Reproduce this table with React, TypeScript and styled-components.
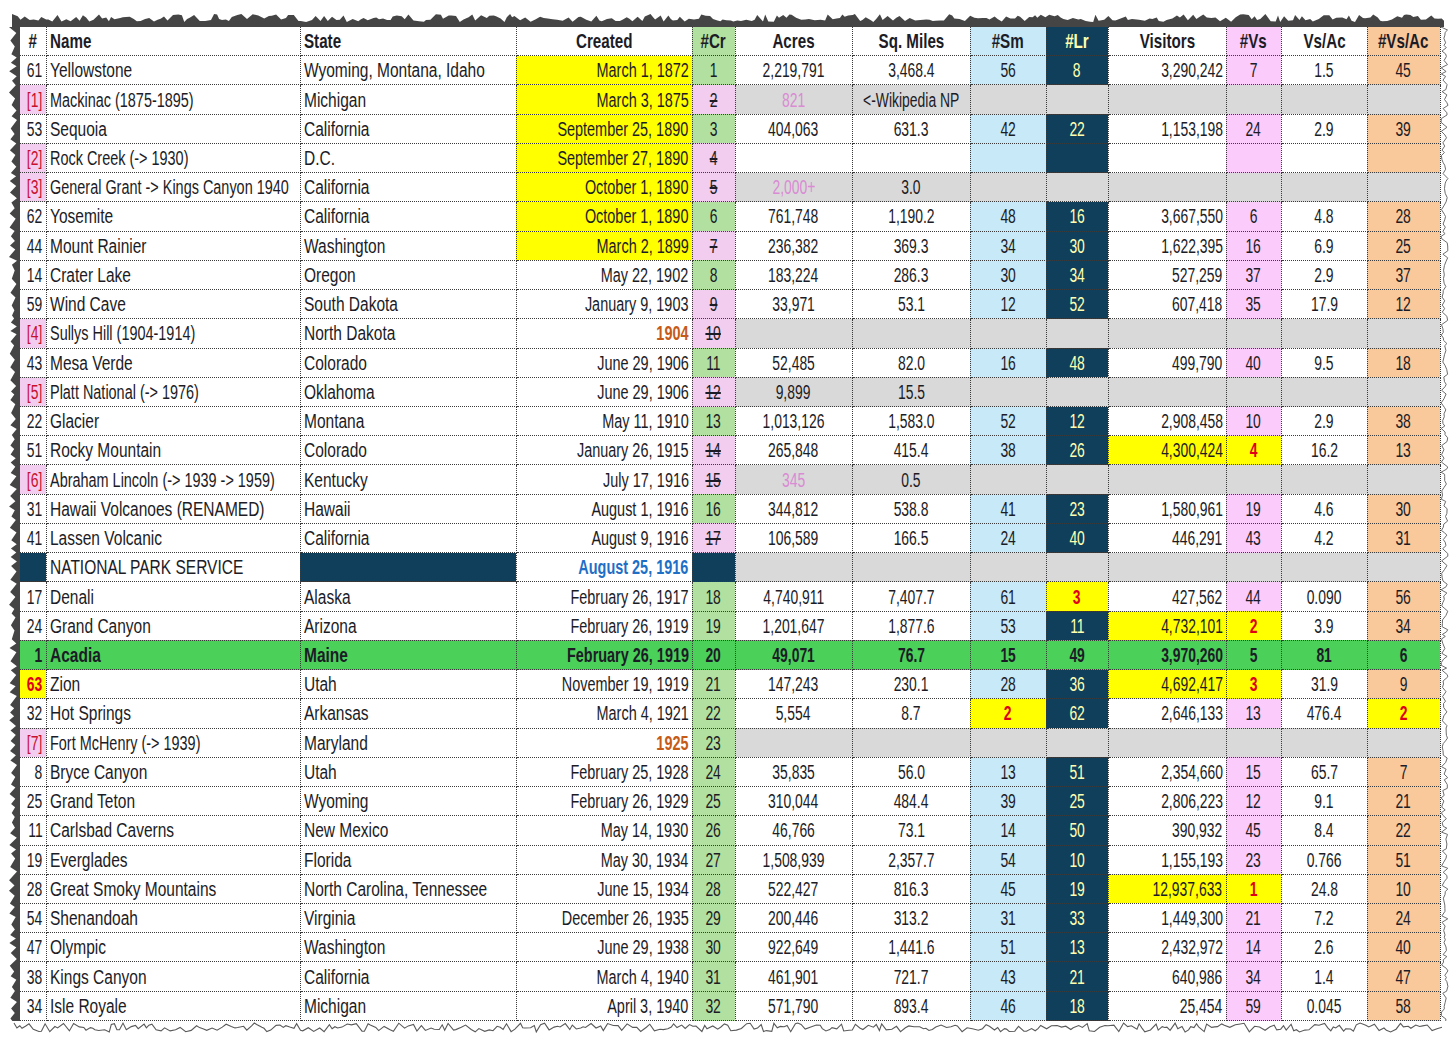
import React from "react";
import styled, { createGlobalStyle } from "styled-components";

const GlobalStyle = createGlobalStyle`
  body {
    margin: 0;
    background: #ffffff;
  }
`;

const C = {
  white: "#ffffff",
  yellow: "#ffff00",
  green: "#b1e0a0",
  pink: "#f2cdef",
  vsPink: "#fbcbfb",
  blue: "#c8e9f8",
  navy: "#0f3f5b",
  orange: "#f9c99c",
  gray: "#d9d9d9",
  acadia: "#4bd05a",
  ink: "#1c1c26",
  red: "#e00018",
  bracket: "#c8102e",
  lilac: "#d98bd4",
  rust: "#c65a17",
  link: "#1f6fc6",
  navyText: "#ffffb0",
};

type Key =
  | "num" | "name" | "state" | "created" | "cr" | "acres" | "sq"
  | "sm" | "lr" | "vis" | "vs" | "vsac" | "vsr";

type Align = "left" | "center" | "right";

interface Column {
  key: Key;
  label: string;
  width: number;
  align: Align;
  head: Align;
  bg: string;
}

const columns: Column[] = [
  { key: "num", label: "#", width: 26, align: "right", head: "center", bg: C.white },
  { key: "name", label: "Name", width: 254, align: "left", head: "left", bg: C.white },
  { key: "state", label: "State", width: 216, align: "left", head: "left", bg: C.white },
  { key: "created", label: "Created", width: 176, align: "right", head: "center", bg: C.white },
  { key: "cr", label: "#Cr", width: 43, align: "center", head: "center", bg: C.green },
  { key: "acres", label: "Acres", width: 117, align: "center", head: "center", bg: C.white },
  { key: "sq", label: "Sq. Miles", width: 118, align: "center", head: "center", bg: C.white },
  { key: "sm", label: "#Sm", width: 76, align: "center", head: "center", bg: C.blue },
  { key: "lr", label: "#Lr", width: 62, align: "center", head: "center", bg: C.navy },
  { key: "vis", label: "Visitors", width: 118, align: "right", head: "center", bg: C.white },
  { key: "vs", label: "#Vs", width: 55, align: "center", head: "center", bg: C.vsPink },
  { key: "vsac", label: "Vs/Ac", width: 86, align: "center", head: "center", bg: C.white },
  { key: "vsr", label: "#Vs/Ac", width: 73, align: "center", head: "center", bg: C.orange },
];

const rankKeys: Key[] = ["num", "sm", "lr", "vs", "vsr"];
// the text columns use a wider narrow face than the number columns
const textKeys: Key[] = ["name", "state", "created"];

const squeezeFor = (key: Key, value: string) => {
  if (!textKeys.includes(key)) return 0.695;
  return /[0-9>]/.test(value) ? 0.722 : 0.775;
};

interface Row {
  num: string;
  name: string;
  state: string;
  created: string;
  cr: string;
  acres?: string;
  sq?: string;
  sm?: string;
  lr?: string;
  vis?: string;
  vs?: string;
  vsac?: string;
  vsr?: string;
  kind?: "gone" | "nps" | "acadia";
  crGone?: boolean;
  hl?: Key[];
  lilac?: boolean;
  rust?: boolean;
}

const park = (
  num: string, name: string, state: string, created: string, cr: string,
  acres: string, sq: string, sm: string, lr: string, vis: string, vs: string, vsac: string, vsr: string,
  extra: Partial<Row> = {}
): Row => ({ num, name, state, created, cr, acres, sq, sm, lr, vis, vs, vsac, vsr, ...extra });

const rows: Row[] = [
  park("61", "Yellowstone", "Wyoming, Montana, Idaho", "March 1, 1872", "1", "2,219,791", "3,468.4", "56", "8", "3,290,242", "7", "1.5", "45", { hl: ["created"] }),
  { num: "[1]", name: "Mackinac (1875-1895)", state: "Michigan", created: "March 3, 1875", cr: "2", acres: "821", sq: "<-Wikipedia NP", kind: "gone", crGone: true, hl: ["created"], lilac: true },
  park("53", "Sequoia", "California", "September 25, 1890", "3", "404,063", "631.3", "42", "22", "1,153,198", "24", "2.9", "39", { hl: ["created"] }),
  { num: "[2]", name: "Rock Creek (-> 1930)", state: "D.C.", created: "September 27, 1890", cr: "4", crGone: true, hl: ["created"] },
  { num: "[3]", name: "General Grant -> Kings Canyon 1940", state: "California", created: "October 1, 1890", cr: "5", acres: "2,000+", sq: "3.0", kind: "gone", crGone: true, hl: ["created"], lilac: true },
  park("62", "Yosemite", "California", "October 1, 1890", "6", "761,748", "1,190.2", "48", "16", "3,667,550", "6", "4.8", "28", { hl: ["created"] }),
  park("44", "Mount Rainier", "Washington", "March 2, 1899", "7", "236,382", "369.3", "34", "30", "1,622,395", "16", "6.9", "25", { hl: ["created"], crGone: true }),
  park("14", "Crater Lake", "Oregon", "May 22, 1902", "8", "183,224", "286.3", "30", "34", "527,259", "37", "2.9", "37"),
  park("59", "Wind Cave", "South Dakota", "January 9, 1903", "9", "33,971", "53.1", "12", "52", "607,418", "35", "17.9", "12", { crGone: true }),
  { num: "[4]", name: "Sullys Hill (1904-1914)", state: "North Dakota", created: "1904", cr: "10", kind: "gone", crGone: true, rust: true },
  park("43", "Mesa Verde", "Colorado", "June 29, 1906", "11", "52,485", "82.0", "16", "48", "499,790", "40", "9.5", "18"),
  { num: "[5]", name: "Platt National (-> 1976)", state: "Oklahoma", created: "June 29, 1906", cr: "12", acres: "9,899", sq: "15.5", kind: "gone", crGone: true },
  park("22", "Glacier", "Montana", "May 11, 1910", "13", "1,013,126", "1,583.0", "52", "12", "2,908,458", "10", "2.9", "38"),
  park("51", "Rocky Mountain", "Colorado", "January 26, 1915", "14", "265,848", "415.4", "38", "26", "4,300,424", "4", "16.2", "13", { crGone: true, hl: ["vis", "vs"] }),
  { num: "[6]", name: "Abraham Lincoln (-> 1939 -> 1959)", state: "Kentucky", created: "July 17, 1916", cr: "15", acres: "345", sq: "0.5", kind: "gone", crGone: true, lilac: true },
  park("31", "Hawaii Volcanoes (RENAMED)", "Hawaii", "August 1, 1916", "16", "344,812", "538.8", "41", "23", "1,580,961", "19", "4.6", "30"),
  park("41", "Lassen Volcanic", "California", "August 9, 1916", "17", "106,589", "166.5", "24", "40", "446,291", "43", "4.2", "31", { crGone: true }),
  { num: "", name: "NATIONAL PARK SERVICE", state: "", created: "August 25, 1916", cr: "", kind: "nps" },
  park("17", "Denali", "Alaska", "February 26, 1917", "18", "4,740,911", "7,407.7", "61", "3", "427,562", "44", "0.090", "56", { hl: ["lr"] }),
  park("24", "Grand Canyon", "Arizona", "February 26, 1919", "19", "1,201,647", "1,877.6", "53", "11", "4,732,101", "2", "3.9", "34", { hl: ["vis", "vs"] }),
  park("1", "Acadia", "Maine", "February 26, 1919", "20", "49,071", "76.7", "15", "49", "3,970,260", "5", "81", "6", { kind: "acadia" }),
  park("63", "Zion", "Utah", "November 19, 1919", "21", "147,243", "230.1", "28", "36", "4,692,417", "3", "31.9", "9", { hl: ["num", "vis", "vs"] }),
  park("32", "Hot Springs", "Arkansas", "March 4, 1921", "22", "5,554", "8.7", "2", "62", "2,646,133", "13", "476.4", "2", { hl: ["sm", "vsr"] }),
  { num: "[7]", name: "Fort McHenry (-> 1939)", state: "Maryland", created: "1925", cr: "23", kind: "gone", rust: true },
  park("8", "Bryce Canyon", "Utah", "February 25, 1928", "24", "35,835", "56.0", "13", "51", "2,354,660", "15", "65.7", "7"),
  park("25", "Grand Teton", "Wyoming", "February 26, 1929", "25", "310,044", "484.4", "39", "25", "2,806,223", "12", "9.1", "21"),
  park("11", "Carlsbad Caverns", "New Mexico", "May 14, 1930", "26", "46,766", "73.1", "14", "50", "390,932", "45", "8.4", "22"),
  park("19", "Everglades", "Florida", "May 30, 1934", "27", "1,508,939", "2,357.7", "54", "10", "1,155,193", "23", "0.766", "51"),
  park("28", "Great Smoky Mountains", "North Carolina, Tennessee", "June 15, 1934", "28", "522,427", "816.3", "45", "19", "12,937,633", "1", "24.8", "10", { hl: ["vis", "vs"] }),
  park("54", "Shenandoah", "Virginia", "December 26, 1935", "29", "200,446", "313.2", "31", "33", "1,449,300", "21", "7.2", "24"),
  park("47", "Olympic", "Washington", "June 29, 1938", "30", "922,649", "1,441.6", "51", "13", "2,432,972", "14", "2.6", "40"),
  park("38", "Kings Canyon", "California", "March 4, 1940", "31", "461,901", "721.7", "43", "21", "640,986", "34", "1.4", "47"),
  park("34", "Isle Royale", "Michigan", "April 3, 1940", "32", "571,790", "893.4", "46", "18", "25,454", "59", "0.045", "58"),
];

/* page: torn paper frame round the sheet, laid out as a grid */
const Page = styled.div`
  display: grid;
  grid-template-columns: 20px 1420px 16px;
  grid-template-rows: 27px auto 1fr;
  width: 1456px;
  height: 1048px;
  overflow: hidden;
  background: #ffffff;
`;

const TopTear = styled.svg`
  grid-column: 1 / 4;
  grid-row: 1;
  display: block;
`;

const SideTear = styled.svg<{ $col: number }>`
  grid-column: ${(p) => p.$col};
  grid-row: 2;
  display: block;
  height: 100%;
`;

const BottomTear = styled.svg`
  grid-column: 1 / 4;
  grid-row: 3;
  display: block;
`;

const Sheet = styled.table`
  grid-column: 2;
  grid-row: 2;
  border-collapse: collapse;
  table-layout: fixed;
  width: 1420px;
  font-family: "Liberation Sans", Arial, sans-serif;
  color: ${C.ink};
`;

const HeadCell = styled.th<{ $bg: string; $align: Align; $light: boolean }>`
  height: 28.2px;
  padding: 0 3px;
  background: ${(p) => p.$bg};
  color: ${(p) => (p.$light ? C.navyText : C.ink)};
  text-align: ${(p) => p.$align};
  font-size: 20.5px;
  font-weight: 700;
  border-right: 1px dotted #3a3a3a;
  border-bottom: 1px dotted #3a3a3a;
  white-space: nowrap;
  line-height: 1;
`;

const Cell = styled.td<{ $bg: string; $align: Align; $color: string; $bold: boolean }>`
  height: 28.2px;
  padding: 0 3px;
  background: ${(p) => p.$bg};
  color: ${(p) => p.$color};
  text-align: ${(p) => p.$align};
  font-size: 20px;
  font-weight: ${(p) => (p.$bold ? 700 : 400)};
  border-right: 1px dotted #3a3a3a;
  border-bottom: 1px dotted #3a3a3a;
  white-space: nowrap;
  line-height: 1;
`;

// narrows the glyphs the way Excel's narrow faces do; the negative margin
// keeps the unscaled box from pushing past the cell before it is scaled
const Squeeze = styled.span<{ $scale: number; $origin: Align; $strike?: boolean }>`
  display: inline-block;
  transform: scaleX(${(p) => p.$scale});
  transform-origin: ${(p) => p.$origin} center;
  margin: ${(p) => (p.$origin === "left" ? "0 -120px 0 0" : p.$origin === "right" ? "0 0 0 -120px" : "0 -60px")};
  text-decoration: ${(p) => (p.$strike ? "line-through" : "none")};
`;

function seeded(seed: number) {
  let s = seed;
  return () => {
    s = (s * 16807) % 2147483647;
    return s / 2147483647;
  };
}

function edge(len: number, minStep: number, maxStep: number, lo: number, hi: number, seed: number) {
  const r = seeded(seed);
  const pts: [number, number][] = [];
  let t = 0;
  while (t < len) {
    pts.push([t, lo + r() * (hi - lo)]);
    t += minStep + r() * (maxStep - minStep);
  }
  pts.push([len, lo + r() * (hi - lo)]);
  return pts;
}

const fmt = (pts: [number, number][], swap = false) =>
  pts.map(([a, b]) => (swap ? `${b.toFixed(1)},${a.toFixed(1)}` : `${a.toFixed(1)},${b.toFixed(1)}`)).join(" ");

const topPts = edge(1432, 2, 6, 14, 22, 7).map(([x, y]) => [x + 12, y] as [number, number]);
const leftPts = (() => {
  const r = seeded(91);
  const pts: [number, number][] = [];
  let y = 0;
  while (y < 994) {
    pts.push([9 + r() * 3, y]);
    y += 3 + r() * 3;
    pts.push([14 + r() * 3, y]);
    y += 4 + r() * 5;
  }
  return pts;
})();
const rightPts = edge(994, 2, 5, 1, 8, 33);
const bottomPts = edge(1428, 2, 6, 2, 11, 55).map(([x, y]) => [x + 14, y] as [number, number]);

function cellLook(row: Row, col: Column, index: number) {
  let bg = col.bg;
  let color = C.ink;
  let bold = false;
  let strike = false;
  const acresIdx = 5;

  if (row.kind === "gone" && index >= acresIdx) bg = C.gray;
  if (col.key === "num" && row.num.startsWith("[")) {
    bg = C.pink;
    color = C.bracket;
  }
  if (col.key === "cr" && row.crGone) {
    bg = C.pink;
    strike = true;
  }
  if (col.key === "acres" && row.lilac) color = C.lilac;
  if (col.key === "created" && row.rust) {
    color = C.rust;
    bold = true;
  }
  if (row.hl && row.hl.includes(col.key)) {
    bg = C.yellow;
    if (rankKeys.includes(col.key)) {
      color = C.red;
      bold = true;
    }
  }
  if (row.kind === "nps") {
    if (index >= acresIdx) bg = C.gray;
    if (col.key === "num" || col.key === "state" || col.key === "cr") bg = C.navy;
    if (col.key === "created") {
      color = C.link;
      bold = true;
    }
  }
  if (row.kind === "acadia") {
    bg = C.acadia;
    bold = true;
  }
  if (bg === C.navy && col.key === "lr") color = C.navyText;
  return { bg, color, bold, strike };
}

const App: React.FC = () => {
  return (
    <Page>
      <GlobalStyle />
      <TopTear width={1456} height={27}>
        <polygon fill="#454545" points={`12,27 ${fmt(topPts)} 1444,27`} />
      </TopTear>

      <SideTear $col={1} width={20} viewBox="0 0 20 994" preserveAspectRatio="none">
        <polygon fill="#454545" points={`20,0 ${fmt(leftPts)} 20,994`} />
      </SideTear>

      <Sheet>
        <colgroup>
          {columns.map((c) => (
            <col key={c.key} style={{ width: c.width }} />
          ))}
        </colgroup>
        <thead>
          <tr>
            {columns.map((c) => (
              <HeadCell key={c.key} $bg={c.bg} $align={c.head} $light={c.bg === C.navy}>
                <Squeeze $scale={0.74} $origin={c.head}>
                  {c.label}
                </Squeeze>
              </HeadCell>
            ))}
          </tr>
        </thead>
        <tbody>
          {rows.map((row, ri) => (
            <tr key={ri}>
              {columns.map((c, ci) => {
                const look = cellLook(row, c, ci);
                const value = row[c.key] ?? "";
                return (
                  <Cell key={c.key} $bg={look.bg} $align={c.align} $color={look.color} $bold={look.bold}>
                    {value !== "" && (
                      <Squeeze $scale={squeezeFor(c.key, value)} $origin={c.align} $strike={look.strike}>
                        {value}
                      </Squeeze>
                    )}
                  </Cell>
                );
              })}
            </tr>
          ))}
        </tbody>
      </Sheet>

      <SideTear $col={3} width={16} viewBox="0 0 16 994" preserveAspectRatio="none">
        <polyline fill="none" stroke="#6e6e6e" strokeWidth={1} points={fmt(rightPts, true)} />
      </SideTear>

      <BottomTear width={1456} height={20}>
        <polyline fill="none" stroke="#5a5a5a" strokeWidth={1.1} points={fmt(bottomPts)} />
      </BottomTear>
    </Page>
  );
};

export default App;
